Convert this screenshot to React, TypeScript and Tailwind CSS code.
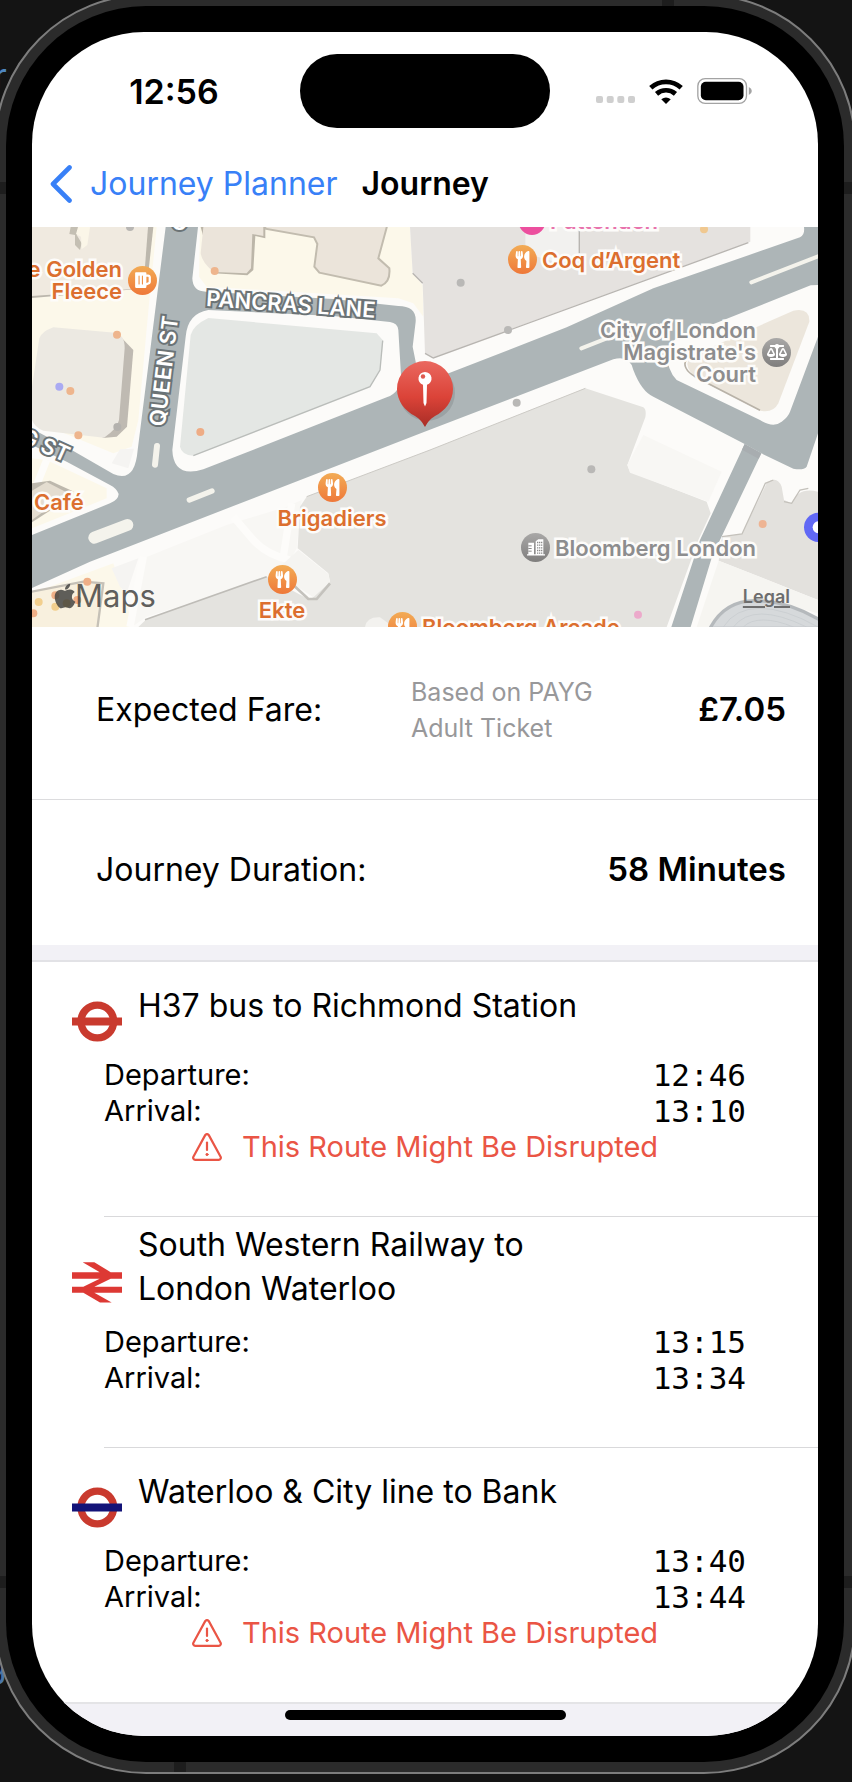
import type { ReactNode } from "react";
import { FaApple, FaBeer, FaBalanceScale, FaUtensils } from "react-icons/fa";

type Leg = {
  title: string;
  mode: "bus" | "rail" | "tube";
  departure: string;
  arrival: string;
  disrupted: boolean;
};

const legs: Leg[] = [
  { title: "H37 bus to Richmond Station", mode: "bus", departure: "12:46", arrival: "13:10", disrupted: true },
  { title: "South Western Railway to London Waterloo", mode: "rail", departure: "13:15", arrival: "13:34", disrupted: false },
  { title: "Waterloo & City line to Bank", mode: "tube", departure: "13:40", arrival: "13:44", disrupted: true },
];

function Roundel({ bar }: { bar: string }) {
  return (
    <svg viewBox="0 0 150 122" className="h-[41px] w-[50px]" aria-hidden="true">
      <circle cx="76" cy="61" r="49" fill="none" stroke="#c93a2e" strokeWidth="22" />
      <rect x="0" y="49" width="150" height="24" fill={bar} />
    </svg>
  );
}

function RailLogo() {
  return (
    <svg viewBox="216 157 150 122" className="h-[41px] w-[50px]" aria-hidden="true">
      <path
        fill="#dd3934"
        d="M248 157H283L332 187H366V207H332L283 231H366V249H283L335 278H300L250 249H216V231H250L299 207H216V187H299Z"
      />
    </svg>
  );
}

function Warning() {
  return (
    <svg viewBox="0 0 30 28" className="h-7 w-[30px]" fill="none" stroke="#ea5545" strokeLinecap="round" strokeLinejoin="round" aria-hidden="true">
      <path strokeWidth="2.2" d="M13.2 2.1a2.1 2.1 0 0 1 3.6 0l11.8 21.6a2.1 2.1 0 0 1-1.8 3.1H3.2a2.1 2.1 0 0 1-1.8-3.1Z" />
      <path strokeWidth="2.2" d="M15 9.5v7.5" />
      <circle cx="15" cy="21.500" r="1.100" fill="#ea5545" strokeWidth="1" />
    </svg>
  );
}

function StatusBar() {
  return (
    <div className="grid grid-cols-[1fr_250px_1fr] items-center pt-[22px]">
      <div className="pl-4 text-center text-[34px] font-semibold">12:56</div>
      <div className="h-[74px] rounded-full bg-black" />
      <div className="flex items-center gap-3.5 pl-[46px]">
        <svg viewBox="0 0 39 26" className="h-[26px] w-[39px]" fill="#cfcfcf" aria-hidden="true">
          <rect x="0" y="18" width="7" height="7" rx="2" />
          <rect x="10.7" y="18" width="7" height="7" rx="2" />
          <rect x="21.3" y="18" width="7" height="7" rx="2" />
          <rect x="32" y="18" width="7" height="7" rx="2" />
        </svg>
        <svg viewBox="0 0 100 74" className="h-[25px] w-[34px]" fill="none" stroke="#000" strokeWidth="14" aria-hidden="true">
          <path d="M5 26a66 66 0 0 1 90 0" />
          <path d="M22 44a42 42 0 0 1 56 0" />
          <path d="M50 74 36 60q14-10 28 0Z" fill="#000" stroke="none" />
        </svg>
        <svg viewBox="0 0 164 78" className="h-[26px] w-[55px]" aria-hidden="true">
          <rect x="2" y="2" width="146" height="74" rx="22" fill="none" stroke="#a3a3a3" strokeWidth="4" />
          <rect x="11" y="11" width="128" height="56" rx="15" />
          <path d="M155 27q9 4 9 12t-9 12Z" fill="#a3a3a3" />
        </svg>
      </div>
    </div>
  );
}

function NavBar() {
  return (
    <header className="flex h-[99px] items-center gap-6 pt-3 pl-[18px] text-[32px]">
      <a href="#planner" className="flex items-center gap-[18px] text-[#3880f7]">
        <svg viewBox="0 0 22 38" className="h-[38px] w-[22px]" fill="none" stroke="currentColor" strokeWidth="4.6" strokeLinecap="round" strokeLinejoin="round" aria-hidden="true">
          <path d="M19.5 2.5 3 19l16.5 16.5" />
        </svg>
        Journey Planner
      </a>
      <h1 className="font-semibold">Journey</h1>
    </header>
  );
}

const dots: [number, number, string][] = [
  [644, 153, "#eeb58d"], [351, 344, "#eeb58d"], [211, 513, "#eeb58d"], [235, 646, "#eeb58d"],
  [601, 636, "#eeac85"], [178, 500, "#aaaaf2"], [352, 621, "#b4b2ae"], [390, 21, "#b8b6b3"],
  [262, 1085, "#efaf87"], [116, 1146, "#f2cf8e"], [166, 1160, "#f2cf8e"], [200, 1150, "#f2c060"],
  [166, 1126, "#efaf87"], [232, 1140, "#efaf87"], [100, 1180, "#efaf87"],
  [1382, 188, "#b9b8b6"], [1524, 330, "#b9b8b6"], [1550, 548, "#b9b8b6"], [1774, 748, "#b9b8b6"],
  [2112, 28, "#f0c890"], [2288, 912, "#eeb493"], [1914, 1184, "#ecaacb"],
];

function MapDrawing() {
  return (
    <svg viewBox="96 21 2358 1200" preserveAspectRatio="xMidYMid slice" className="h-full w-full" aria-hidden="true">
      <rect x="96" y="21" width="2358" height="1200" fill="#fcfbf9" />

      {/* ground around the western blocks */}
      <path fill="#fcf8ea" d="M96 21H470L448 240 415 600 395 680 340 700 96 600Z" />
      <path fill="#f5f4f2" d="M360 688 402 686 385 745 335 730Z" />
      <path fill="#fcf8ea" d="M96 715 140 720 320 805 320 835 96 925Z" />
      <path fill="#fcf8ea" d="M96 1120 340 1030 395 1200 390 1221H96Z" />
      <path fill="#f5f4f2" d="M335 1045 415 1015 380 1120 360 1100Z" />
      <path fill="#f8f7f4" d="M430 1015 680 915 860 860 905 840 890 985 850 1060 440 1190 395 1221Z" />
      <path fill="none" stroke="#fdfcfa" strokeWidth="22" d="M700 890 760 960Q800 1005 870 1020M875 850 850 1010M430 1010 390 1221M96 830 140 720" />
      <path fill="#fcf8ea" d="M600 21H1230L1238 160 1268 195 1270 290 1240 250 1195 235 620 200 597 170Z" />

      {/* buildings */}
      <path fill="#bcb7ad" d="M96 21H460L440 205 96 234Z" />
      <path fill="#f0eae0" d="M96 21H444L430 205 96 228Z" />
      <path fill="#c4bfb3" d="M212 21H240L230 45 245 70 240 90 225 75 225 45 208 42Z" />
      <path fill="#fbf6e8" d="M234 21H270L262 75 245 88 243 50 228 42Z" />
      <path fill="#bfbab2" d="M350 338 400 390 381 620 350 650 308 654Z" />
      <path fill="#ece9e2" d="M160 322 345 338Q375 345 374 385L357 600Q353 625 312 653L130 632Q104 622 96 600V500L104 448 118 355Q125 335 160 322Z" />
      <path fill="#bcb6a9" d="M602 21H796V55L766 48 760 150 742 166 640 160Z" />
      <path fill="#ebe4da" d="M610 21H790V48L757 42 753 145 740 160 640 156Q605 125 602 100Z" />
      <path fill="#ebe4da" stroke="#c2bcaf" strokeWidth="6" d="M796 15V26L942 52 952 72 943 140 958 158 1144 197Q1172 185 1168 145L1135 115 1162 15Z" />
      <path fill="#e5e2df" d="M1230 21H2251V65L1296 414 1275 400 1268 190 1238 160Z" />
      <path fill="#f2f1ef" d="M1576 21H1736V115L1680 130 1576 100Z" />
      <path fill="none" stroke="#b8b5b1" strokeWidth="4" d="M2245 68 1300 414 1275 400M1268 190 1238 160M1738 21V100" />
      <path fill="#bdb8ad" d="M96 790 150 782 222 815 215 830 96 907Z" />
      <path fill="#e4ddd0" d="M96 812 140 786 205 820 96 900Z" />
      <path fill="#f8f0de" stroke="#c6c1b7" strokeWidth="7" d="M70 1120 250 1085 310 1090 290 1240H70Z" />

      <path fill="#e4e3df" d="M1756 505 1930 562Q1940 568 1936 592L1882 735 1890 755 2120 845 2132 880 2095 960 2000 1221H415L440 1197 800 1070 930 1140 990 1085 985 1060 893 985 900 860 920 830 1290 690Z" />
      <path fill="none" stroke="#bebcb7" strokeWidth="5" d="M435 1199 800 1070" />
      <path fill="none" stroke="#cccac5" strokeWidth="3" d="M920 830 1290 690 1756 505" />
      <path fill="#f5f4f1" d="M895 990 985 1062 990 1085 940 1132 870 1085 840 1040Z" />
      <path fill="none" stroke="#c4c2bd" strokeWidth="8" d="M880 1095 925 1137 950 1137 990 1090" />
      <path fill="#f3f2ef" d="M1095 1221Q1100 1190 1140 1192L1180 1221Z" />
      <path fill="#f8f7f4" d="M1930 645 2165 755 2125 845 1890 758 1882 735Z" />
      <path fill="#e3e1dd" d="M2300 790Q2330 765 2345 800L2352 840 2375 850Q2395 800 2454 815V1140L2156 1022 2166 950 2226 942Z" />
      <path fill="none" stroke="#c4c1bb" strokeWidth="4" d="M2166 950 2226 942 2296 790 2320 780M2352 845 2375 850 2400 810 2425 805" />
      <path fill="#f6f5f1" d="M2156 1022 2454 1140V1180L2300 1140 2130 1221H2090Z" />
      <path fill="#d6d9db" stroke="#b5b9bc" strokeWidth="10" d="M2130 1225Q2175 1140 2270 1142T2460 1200V1225Z" />
      <g fill="none" stroke="#c5cacd" strokeWidth="2">
        <path d="M2170 1221Q2205 1165 2280 1165T2454 1221" />
        <path d="M2200 1221Q2230 1182 2285 1182T2420 1221" />
        <path d="M2230 1221Q2250 1200 2290 1200T2380 1221" />
      </g>

      {/* carriageways */}
      <g fill="#adb5b7">
        <path d="M497 21H594L577 175Q578 215 618 215L1000 237 1195 258Q1250 258 1247 305L1238 380 1250 440 1346 460 1700 322 1960 205 2400 52Q2415 45 2412 21H2454V195L2432 196 2120 320Q2000 352 2001 395 2000 450 2030 480L2280 600Q2320 625 2345 605 2365 590 2370 575L2454 350V640L2420 740Q2410 752 2380 746L2284 700 2234 672 1960 530Q1925 515 1900 450 1890 405 1840 418L1266 638 700 858 270 1025 96 1104V945L330 850Q355 840 356 822 350 805 330 795L200 725 96 675V626L215 690 340 762Q405 790 413 690L452 380Z" />
        <path d="M2234 672 2284 700 2136 1010 2072 1221H2014L2100 960Z" />
      </g>
      <path fill="#a8adb0" d="M2234 672 2284 700 2276 716 2226 689Z" />
      <path fill="#fcfbf9" d="M625 270 1000 288 1170 306Q1193 309 1195 330L1203 465Q1205 515 1160 532L610 748Q520 775 517 690L557 350Q563 280 625 270Z" />
      <path fill="#e4e7e4" d="M625 294 1130 340 1150 362 1140 450 1110 500 580 707Q545 705 540 680L572 345Q580 315 625 294Z" />
      <path fill="none" stroke="#babdba" strokeWidth="4" d="M1148 362 1140 450 1110 500 580 707" />

      {/* court building */}
      <path fill="#ece6dc" d="M2070 410 2380 272Q2430 262 2428 305L2335 550Q2320 580 2280 572L2100 480Q2045 445 2070 410Z" />
      <path fill="none" stroke="#b8b2a8" strokeWidth="5" d="M2058 420Q2045 445 2085 470L2280 571" />

      {/* traffic islands */}
      <g stroke="#f4f3ec" strokeLinecap="round" fill="none">
        <path strokeWidth="18" d="M471 678 465 734" />
        <path strokeWidth="16" d="M568 840 636 813" />
        <path strokeWidth="36" d="M283 953 382 915" />
        <path strokeWidth="12" d="M1744 385 1820 355M2254 187 2460 107" />
      </g>

      {dots.map(([x, y, c]) => (
        <circle key={`${x}-${y}`} cx={x} cy={y} r="12" fill={c} />
      ))}
      <circle cx="2456" cy="922" r="44" fill="#6168f5" />
      <circle cx="2456" cy="922" r="18" fill="#fff" />
      <circle cx="1596" cy="5" r="40" fill="#ec4f9e" />
    </svg>
  );
}

function Badge({ tone, children }: { tone: "orange" | "gray"; children: ReactNode }) {
  return (
    <span
      className={
        "flex size-[29px] shrink-0 items-center justify-center rounded-full text-white " +
        (tone === "orange" ? "bg-linear-to-b from-[#f2ab55] to-[#ee7839]" : "bg-linear-to-b from-[#a9a8a7] to-[#7f7e7d]")
      }
    >
      {children}
    </span>
  );
}

function Offices() {
  return (
    <svg viewBox="0 0 54 50" className="h-[17px] w-[18px]" aria-hidden="true">
      <path fill="#fff" d="M26 6 34 0H49V45H54V49H0V45H4V11H21V45H26Z" />
      <path stroke="#8b8a89" strokeWidth="4" strokeDasharray="4 4" d="M32 8V44M38 8V44M44 8V44" />
      <path stroke="#8b8a89" strokeWidth="3" d="M4 20H14M4 28H14M4 36H14" />
    </svg>
  );
}

const halo = "[paint-order:stroke] [-webkit-text-stroke:5px_#fdfcfa]";
const poi = "absolute text-[22px] leading-[22px] font-semibold whitespace-nowrap " + halo;
const street = "absolute text-[22px] leading-6 font-semibold whitespace-nowrap text-white [paint-order:stroke] [-webkit-text-stroke:4px_#6b7376]";

function MapPanel() {
  return (
    <section aria-label="Map" className="relative h-[400px] overflow-hidden">
      <MapDrawing />

      <span className={street + " top-[65px] left-[174px] rotate-4"}>PANCRAS LANE</span>
      <span className={street + " top-[132px] left-[76px] -rotate-83"}>QUEEN ST</span>
      <span className={street + " top-[206px] -left-[12px] rotate-24"}>G ST</span>
      <span className={street + " -top-[17px] left-[139px]"}>O</span>

      <div className={poi + " top-[31px] right-[661px] flex items-center gap-1.5 text-right text-[#dc6f2f]"}>
        <span>The Golden<br />Fleece</span>
        <Badge tone="orange"><FaBeer size={18} /></Badge>
      </div>
      <div className={poi + " top-[264px] left-[2px] text-[#dc6f2f]"}>Café</div>
      <div className={poi + " top-[246px] left-[300px] flex w-0 flex-col items-center gap-[5px] text-[#dc6f2f]"}>
        <Badge tone="orange"><FaUtensils size={17} /></Badge>
        <span>Brigadiers</span>
      </div>
      <div className={poi + " top-[338px] left-[250px] flex w-0 flex-col items-center gap-[5px] text-[#dc6f2f]"}>
        <Badge tone="orange"><FaUtensils size={17} /></Badge>
        <span>Ekte</span>
      </div>
      <div className={poi + " top-[18px] left-[476px] flex items-center gap-[5px] text-[#dc6f2f]"}>
        <Badge tone="orange"><FaUtensils size={17} /></Badge>
        <span>Coq d’Argent</span>
      </div>
      <div className={poi + " -top-[17px] left-[518px] text-[#e873ad]"}>Pattenden</div>
      <div className={poi + " top-[385px] left-[356px] flex items-center gap-[5px] text-[#dc6f2f]"}>
        <Badge tone="orange"><FaUtensils size={17} /></Badge>
        <span>Bloomberg Arcade</span>
      </div>
      <div className={poi + " top-[306px] left-[489px] flex items-center gap-[5px] text-[#8d8d8e]"}>
        <Badge tone="gray"><Offices /></Badge>
        <span>Bloomberg London</span>
      </div>
      <div className={poi + " top-[92px] right-[27px] flex items-center gap-1.5 text-right text-[#8d8d8e]"}>
        <span>City of London<br />Magistrate's<br />Court</span>
        <Badge tone="gray"><FaBalanceScale size={20} /></Badge>
      </div>

      <svg viewBox="0 0 64 76" className="absolute top-[131px] left-[361px] h-[76px] w-16" aria-label="Destination">
        <defs>
          <linearGradient id="pin" x1="0" y1="0" x2="0" y2="1">
            <stop offset="0" stopColor="#ea685f" />
            <stop offset="0.55" stopColor="#db4338" />
            <stop offset="1" stopColor="#a82d26" />
          </linearGradient>
        </defs>
        <ellipse cx="34" cy="35" rx="28" ry="28" fill="#000" opacity="0.1" />
        <path fill="url(#pin)" d="M32 3a28 28 0 0 1 28 28c0 12-8 22-18 27-5 3-7 6-10 11-3-5-5-8-10-11C12 53 4 43 4 31A28 28 0 0 1 32 3Z" />
        <path fill="#fff" d="M32 14a6.5 6.5 0 0 1 2 12.700L33.500 45 32 48.500 30.500 45 30 26.700A6.500 6.500 0 0 1 32 14Z" />
        <circle cx="30" cy="18.500" r="2.200" fill="#df5a50" />
      </svg>

      <div className="absolute bottom-[13px] left-[19px] flex items-center text-[31px] leading-9 text-[#444442]/85">
        <FaApple size={28} />
        <span className="-ml-1">Maps</span>
      </div>
      <a href="#legal" className="absolute right-[28px] bottom-[20px] text-[18px] leading-5 font-semibold text-[#6d6d6d] underline decoration-2 underline-offset-3">
        Legal
      </a>
    </section>
  );
}

function LegRow({ leg, last }: { leg: Leg; last: boolean }) {
  return (
    <li>
      <div className="px-10 pt-1.5 pb-[51px]">
        <div className="flex min-h-[76px] items-center gap-4">
          <span className="pt-[30px]">
            {leg.mode === "rail" ? <RailLogo /> : <Roundel bar={leg.mode === "bus" ? "#c93a2e" : "#131378"} />}
          </span>
          <h2 className="max-w-[460px] text-[32px] leading-[44px]">{leg.title}</h2>
        </div>
        <div className="mt-[13px] px-8 text-[29px] leading-9">
          <dl className="grid grid-cols-[1fr_auto]">
            <dt>Departure:</dt>
            <dd className="font-['DejaVu_Sans_Mono',monospace] text-[31px]">{leg.departure}</dd>
            <dt>Arrival:</dt>
            <dd className="font-['DejaVu_Sans_Mono',monospace] text-[31px]">{leg.arrival}</dd>
          </dl>
          {leg.disrupted && (
            <p className="flex items-center justify-center gap-5 text-[#ea5545]">
              <Warning />
              This Route Might Be Disrupted
            </p>
          )}
        </div>
      </div>
      {!last && <div className="ml-[72px] h-px bg-[#d9d9db]" />}
    </li>
  );
}

export default function App() {
  return (
    <div className="relative flow-root overflow-hidden bg-[#141414] pb-2 font-['Inter','Liberation_Sans',sans-serif] text-black">
      <span className="absolute top-[50px] -left-[6px] text-[34px] text-[#4f86c0]" aria-hidden="true">r</span>
      <span className="absolute bottom-[92px] -left-[14px] text-[34px] text-[#4a76a8]" aria-hidden="true">g</span>

      <div className="relative -mx-1.5 -mt-1.5 mr-[-4px] overflow-hidden rounded-[152px] border-2 border-[#7d7d7d] bg-[#2b2b2b] p-2.5">
        {/* antenna bands */}
        <i className="absolute top-0 right-[180px] h-2.5 w-3 bg-[#1d1d1d]" />
        <i className="absolute bottom-0 left-[178px] h-2.5 w-3 bg-[#1d1d1d]" />
        <i className="absolute top-[186px] left-0 h-3 w-full bg-[#1d1d1d]" />
        <i className="absolute bottom-[184px] left-0 h-3 w-full bg-[#1d1d1d]" />

        <div className="relative rounded-[140px] bg-black p-[26px]">
          <main className="overflow-hidden rounded-[112px] bg-white">
            <StatusBar />
            <NavBar />
            <MapPanel />

            <section className="flex h-[173px] items-center border-b border-[#dcdcde] pr-8 pb-1.5 pl-16 text-[32px]">
              <span className="w-[315px]">Expected Fare:</span>
              <span className="w-[200px] text-[25px] leading-9 text-[#98989a]">Based on PAYG Adult Ticket</span>
              <strong className="ml-auto text-[33px] font-semibold">£7.05</strong>
            </section>
            <section className="flex h-[145px] items-center justify-between pr-8 pb-1.5 pl-16 text-[32px]">
              <span>Journey Duration:</span>
              <strong className="text-[33px] font-semibold">58 Minutes</strong>
            </section>
            <div className="h-[17px] border-b-2 border-[#e2e2e6] bg-[#f2f1f6]" />

            <ul>
              {legs.map((leg, i) => (
                <LegRow key={leg.title} leg={leg} last={i === legs.length - 1} />
              ))}
            </ul>

            <div className="flex h-[34px] justify-center border-t-2 border-[#e4e4e6] bg-[#f2f1f6] pt-1.5">
              <div className="h-2.5 w-[281px] rounded-full bg-black" />
            </div>
          </main>
        </div>
      </div>
    </div>
  );
}
